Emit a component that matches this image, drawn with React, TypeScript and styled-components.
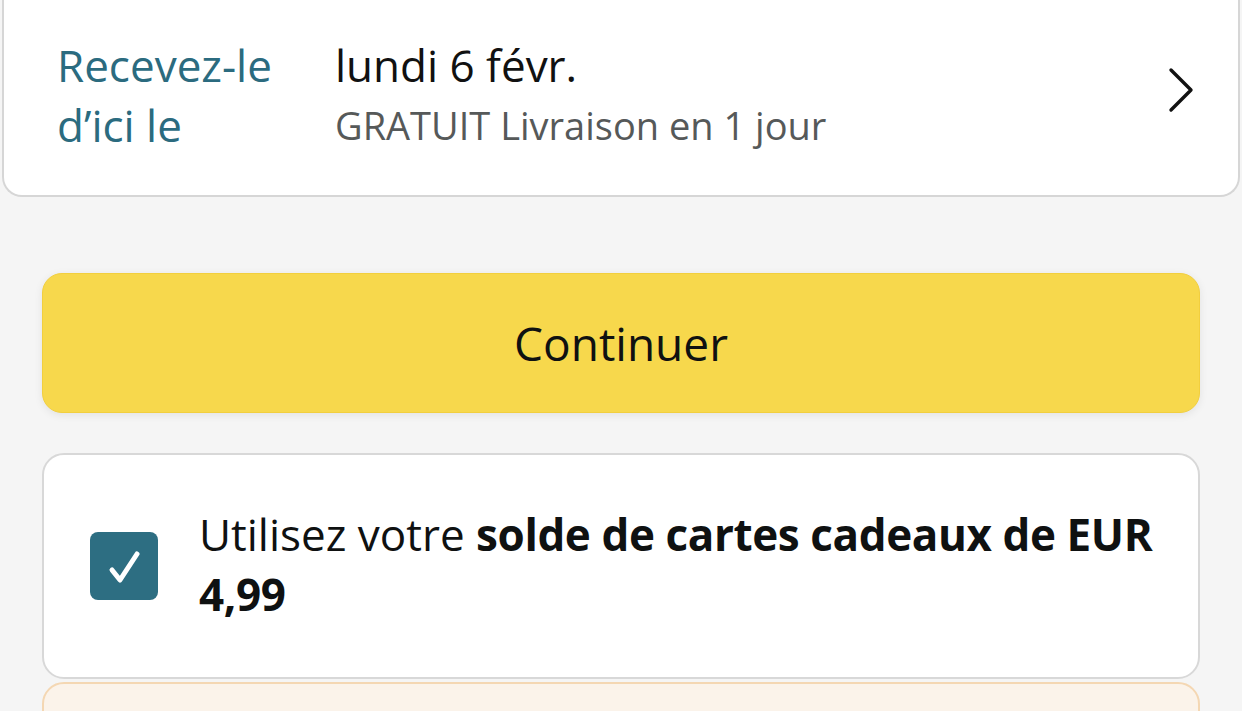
import React from "react";
import styled, { createGlobalStyle } from "styled-components";

const GlobalStyle = createGlobalStyle`
  html, body {
    margin: 0;
    padding: 0;
    background: #f5f5f5;
    font-family: "Open Sans", "Noto Sans", Arial, sans-serif;
    -webkit-font-smoothing: antialiased;
  }
  * { box-sizing: border-box; }
`;

const Page = styled.div`
  width: 1242px;
  height: 711px;
  overflow: hidden;
  background: #f5f5f5;
  padding: 0 2px;
  display: flex;
  flex-direction: column;
  & > * { flex-shrink: 0; }
`;

const DeliveryCard = styled.div`
  height: 197px;
  background: #ffffff;
  border: 2px solid #d6d6d6;
  border-top: none;
  border-radius: 0 0 20px 20px;
  display: flex;
  align-items: flex-start;
  padding: 35px 44px 0 53px;
`;

const Label = styled.div`
  width: 278px;
  flex: none;
  color: #2b6b7f;
  font-size: 44px;
  line-height: 60px;
`;

const DeliveryInfo = styled.div`
  flex: 1;
  display: flex;
  flex-direction: column;
`;

const DateLine = styled.div`
  color: #111111;
  font-size: 44px;
  line-height: 60px;
`;

const SubLine = styled.div`
  color: #565959;
  font-size: 38px;
  line-height: 60px;
`;

const Chevron = styled.svg`
  flex: none;
  width: 26px;
  height: 46px;
  margin-top: 32px;
`;

const Content = styled.div`
  padding: 0 40px;
  display: flex;
  flex-direction: column;
  & > * { flex-shrink: 0; }
`;

const ContinueButton = styled.button`
  margin-top: 76px;
  height: 140px;
  width: 100%;
  border: 1px solid #f2cf3e;
  border-radius: 20px;
  background: #f7d84c;
  box-shadow: 0 2px 8px rgba(0, 0, 0, 0.08);
  color: #0f1111;
  font-family: "Open Sans", "Noto Sans", Arial, sans-serif;
  font-size: 46px;
  padding: 0;
  cursor: pointer;
`;

const GiftCard = styled.label`
  margin-top: 40px;
  height: 226px;
  background: #ffffff;
  border: 2px solid #d8d8d8;
  border-radius: 22px;
  display: flex;
  align-items: center;
  padding: 0 24px 0 46px;
  gap: 41px;
`;

const CheckBox = styled.span`
  flex: none;
  width: 68px;
  height: 68px;
  border-radius: 8px;
  background: #2d6e82;
  display: flex;
  align-items: center;
  justify-content: center;
`;

const GiftText = styled.div`
  color: #0f1111;
  font-size: 44px;
  line-height: 60px;
  margin-top: -4px;
`;

const Bold = styled.span`
  font-weight: 700;
  letter-spacing: -0.4px;
`;

const PromoCard = styled.div`
  margin-top: 3px;
  height: 120px;
  background: #fbf3ea;
  border: 2px solid #f4d7b3;
  border-radius: 22px;
`;

export default function App() {
  return (
    <>
      <GlobalStyle />
      <Page>
        <DeliveryCard>
          <Label>
            Recevez-le
            <br />
            d’ici le
          </Label>
          <DeliveryInfo>
            <DateLine>lundi 6 févr.</DateLine>
            <SubLine>GRATUIT Livraison en 1 jour</SubLine>
          </DeliveryInfo>
          <Chevron viewBox="0 0 26 46" fill="none">
            <path
              d="M3 3 L23 23 L3 43"
              stroke="#111"
              strokeWidth="3.4"
              strokeLinecap="round"
              strokeLinejoin="round"
            />
          </Chevron>
        </DeliveryCard>
        <Content>
          <ContinueButton>Continuer</ContinueButton>
          <GiftCard>
            <CheckBox>
              <svg width="68" height="68" viewBox="0 0 68 68" fill="none">
                <path
                  d="M22 38 L30 48 L47 22"
                  stroke="#fff"
                  strokeWidth="5"
                  strokeLinecap="round"
                  strokeLinejoin="round"
                />
              </svg>
            </CheckBox>
            <GiftText>
              Utilisez votre <Bold>solde de cartes cadeaux de EUR</Bold>
              <br />
              <Bold>4,99</Bold>
            </GiftText>
          </GiftCard>
          <PromoCard />
        </Content>
      </Page>
    </>
  );
}
